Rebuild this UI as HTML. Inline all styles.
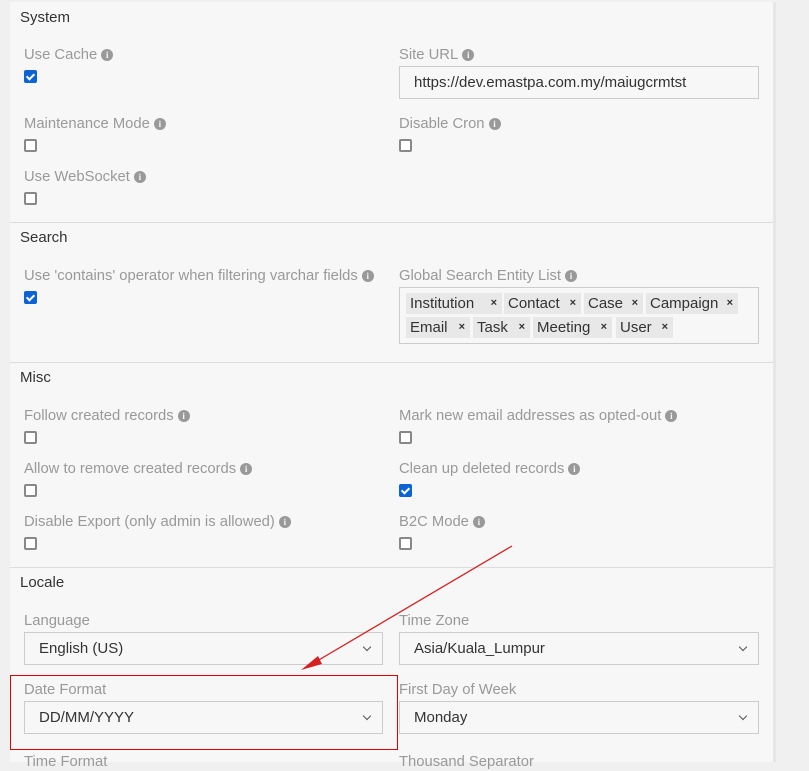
<!DOCTYPE html>
<html><head><meta charset="utf-8"><style>
*{box-sizing:border-box;margin:0;padding:0}
body{width:809px;height:756px;overflow:hidden;background:#f0f0f0;font-family:"Liberation Sans",sans-serif;position:relative}
.panel{position:absolute;left:10px;top:2px;width:763px;height:760px;background:#f7f7f7;box-shadow:3px 0 0 #e6e6e6}
.a{position:absolute}
.h{position:absolute;left:20px;font-size:15px;color:#333;line-height:18px}
.l{position:absolute;font-size:14.8px;color:#999;line-height:18px;white-space:nowrap}
.i{display:inline-block;width:12px;height:12px;border-radius:50%;background:#999;color:#f7f7f7;font-size:9px;line-height:12px;text-align:center;font-weight:bold;margin-left:4px;vertical-align:1px;font-family:"Liberation Serif",serif}
.cb{position:absolute;width:13px;height:13px;border:2px solid #888;border-radius:2px;background:#fff}
.cb.on{background:#0b63d6;border-color:#0b63d6}
.cb.on:after{content:"";position:absolute;left:2px;top:0px;width:3px;height:6px;border:solid #fff;border-width:0 2px 2px 0;transform:rotate(45deg)}
.hr{position:absolute;left:10px;width:763px;height:1px;background:#ddd}
.in{position:absolute;border:1px solid #ccc;background:#f7f7f7;font-size:15px;color:#333;line-height:32px;padding-left:14px}
.sel:after{content:"";position:absolute;right:12px;top:11px;width:5px;height:5px;border:solid #555;border-width:0 1px 1px 0;transform:rotate(45deg)}
.tag{position:absolute;background:#e8e8e8;height:21px;font-size:15px;color:#333;line-height:21px;padding-left:4px}
.tag b{position:absolute;right:5px;font-size:11px;font-weight:bold;color:#333}
</style></head><body>
<div class="panel"></div>
<div class="h" style="top:9px">System</div>
<div class="l" style="left:24px;top:46px">Use Cache<span class="i">i</span></div>
<div class="cb on" style="left:24px;top:70px"></div>
<div class="l" style="left:399px;top:46px">Site URL<span class="i">i</span></div>
<div class="in" style="left:399px;top:66px;width:360px;height:33px">https://dev.emastpa.com.my/maiugcrmtst</div>
<div class="l" style="left:24px;top:115px">Maintenance Mode<span class="i">i</span></div>
<div class="cb" style="left:24px;top:139px"></div>
<div class="l" style="left:399px;top:115px">Disable Cron<span class="i">i</span></div>
<div class="cb" style="left:399px;top:139px"></div>
<div class="l" style="left:24px;top:168px">Use WebSocket<span class="i">i</span></div>
<div class="cb" style="left:24px;top:192px"></div>
<div class="hr" style="top:222px"></div>
<div class="h" style="top:229px">Search</div>
<div class="l" style="left:24px;top:267px">Use 'contains' operator when filtering varchar fields<span class="i">i</span></div>
<div class="cb on" style="left:24px;top:291px"></div>
<div class="l" style="left:399px;top:267px">Global Search Entity List<span class="i">i</span></div>
<div class="in" style="left:399px;top:287px;width:360px;height:57px"></div>
<div class="tag" style="left:406px;top:293px;width:96px">Institution<b>×</b></div>
<div class="tag" style="left:504px;top:293px;width:77px">Contact<b>×</b></div>
<div class="tag" style="left:584px;top:293px;width:59px">Case<b>×</b></div>
<div class="tag" style="left:646px;top:293px;width:92px">Campaign<b>×</b></div>
<div class="tag" style="left:406px;top:317px;width:64px">Email<b>×</b></div>
<div class="tag" style="left:473px;top:317px;width:57px">Task<b>×</b></div>
<div class="tag" style="left:533px;top:317px;width:79px">Meeting<b>×</b></div>
<div class="tag" style="left:616px;top:317px;width:57px">User<b>×</b></div>
<div class="hr" style="top:362px"></div>
<div class="h" style="top:369px">Misc</div>
<div class="l" style="left:24px;top:407px">Follow created records<span class="i">i</span></div>
<div class="cb" style="left:24px;top:431px"></div>
<div class="l" style="left:399px;top:407px">Mark new email addresses as opted-out<span class="i">i</span></div>
<div class="cb" style="left:399px;top:431px"></div>
<div class="l" style="left:24px;top:460px">Allow to remove created records<span class="i">i</span></div>
<div class="cb" style="left:24px;top:484px"></div>
<div class="l" style="left:399px;top:460px">Clean up deleted records<span class="i">i</span></div>
<div class="cb on" style="left:399px;top:484px"></div>
<div class="l" style="left:24px;top:513px">Disable Export (only admin is allowed)<span class="i">i</span></div>
<div class="cb" style="left:24px;top:537px"></div>
<div class="l" style="left:399px;top:513px">B2C Mode<span class="i">i</span></div>
<div class="cb" style="left:399px;top:537px"></div>
<div class="hr" style="top:567px"></div>
<div class="h" style="top:574px">Locale</div>
<div class="l" style="left:24px;top:612px">Language</div>
<div class="in sel" style="left:24px;top:632px;width:359px;height:33px">English (US)</div>
<div class="l" style="left:399px;top:612px">Time Zone</div>
<div class="in sel" style="left:399px;top:632px;width:360px;height:33px">Asia/Kuala_Lumpur</div>
<div class="l" style="left:24px;top:681px">Date Format</div>
<div class="in sel" style="left:24px;top:701px;width:359px;height:33px">DD/MM/YYYY</div>
<div class="l" style="left:399px;top:681px">First Day of Week</div>
<div class="in sel" style="left:399px;top:701px;width:360px;height:33px">Monday</div>
<div class="l" style="left:24px;top:753px">Time Format</div>
<div class="l" style="left:399px;top:753px">Thousand Separator</div>
<div class="a" style="left:10px;top:675px;width:388px;height:75px;border:1px solid #e00000"></div>
<svg class="a" style="left:0;top:0" width="809" height="756">
<line x1="512" y1="546" x2="312" y2="664" stroke="#d42020" stroke-width="1.3"/>
<polygon points="301,670 318,656 322,664" fill="#d42020"/>
</svg>
</body></html>
